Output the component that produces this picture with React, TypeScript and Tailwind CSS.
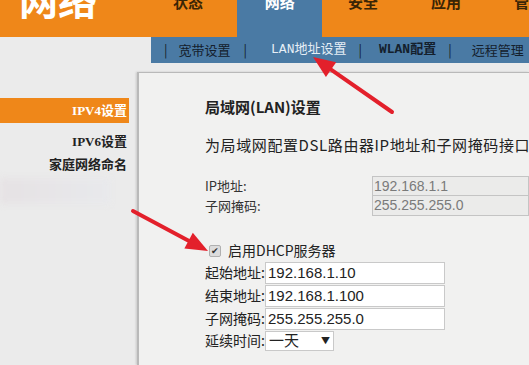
const cjk = { fontFamily: '"Noto Sans CJK SC", "Liberation Sans", sans-serif' };
const serif = { fontFamily: '"Liberation Serif", "Noto Sans CJK SC", serif' };

const Arrow = ({ x1, y1, x2, y2 }: { x1: number; y1: number; x2: number; y2: number }) => {
  const a = Math.atan2(y2 - y1, x2 - x1);
  const len = 22;
  const w = 9;
  const bx = x2 - len * Math.cos(a);
  const by = y2 - len * Math.sin(a);
  const px = -Math.sin(a) * w;
  const py = Math.cos(a) * w;
  return (
    <g>
      <line x1={x1} y1={y1} x2={bx} y2={by} stroke="#e3202b" strokeWidth="4" strokeLinecap="round" />
      <polygon points={`${x2},${y2} ${bx + px},${by + py} ${bx - px},${by - py}`} fill="#e3202b" />
    </g>
  );
};

const Field = ({ label, value }: { label: string; value: string }) => (
  <div className="flex items-center h-[23px]">
    <span className="w-[60px] text-[14px] text-[#222]">{label}</span>
    <div className="w-[180px] h-[22px] bg-white border border-[#c9c9c9] px-[2px] text-[15px] leading-[20px] text-[#222]" style={{ fontFamily: '"Liberation Sans", sans-serif' }}>
      {value}
    </div>
  </div>
);

export default function App() {
  return (
    <div className="relative w-[529px] h-[365px] overflow-hidden bg-[#ebebeb]" style={cjk}>
      {/* header */}
      <div className="h-[37px] bg-[#ef8719] flex items-start">
        <div className="ml-[19px] -mt-[21px] text-[39px] leading-none font-bold text-white w-[156px]">网络</div>
        <div className="-mt-[9px] text-[15px] font-bold text-[#3a2505] w-[65px]">状态</div>
        <div className="w-[86px] h-[37px] bg-[#4a7aa4] flex justify-center">
          <span className="-mt-[9px] text-[15px] font-bold text-white">网络</span>
        </div>
        <div className="ml-[26px] -mt-[9px] text-[15px] font-bold text-[#3a2505] w-[84px]">安全</div>
        <div className="-mt-[9px] text-[15px] font-bold text-[#3a2505] w-[84px]">应用</div>
        <div className="-mt-[9px] text-[15px] font-bold text-[#3a2505]">管</div>
      </div>
      <div className="ml-[151px] h-[26px] bg-[#4a7aa4] flex items-center text-[13px] text-[#14202c]">
        <span className="ml-[13px]">|</span>
        <span className="ml-[11px]">宽带设置</span>
        <span className="ml-[13px]">|</span>
        <span className="ml-[24px] text-[#e6eef6]" style={{ fontFamily: '"Liberation Mono", "Noto Sans CJK SC", monospace' }}>LAN地址设置</span>
        <span className="ml-[12px]">|</span>
        <span className="ml-[17px] font-bold" style={{ fontFamily: '"Liberation Mono", "Noto Sans CJK SC", monospace' }}>WLAN配置</span>
        <span className="ml-[12px]">|</span>
        <span className="ml-[20px]">远程管理</span>
      </div>

      <div className="flex h-[302px]">
        {/* sidebar */}
        <div className="w-[137px] shrink-0 pt-[35px] flex flex-col">
          <div className="w-[129px] h-[25px] bg-[#ef8719] text-white font-bold text-[13px] flex items-center justify-end pr-[2px]" style={serif}>
            IPV4设置
          </div>
          <div className="w-[129px] mt-[9px] text-right text-[13px] font-bold text-[#222] pr-[2px]" style={serif}>IPV6设置</div>
          <div className="w-[129px] mt-[3px] text-right text-[13px] font-bold text-[#222] pr-[2px]" style={serif}>家庭网络命名</div>
          <div className="mt-[4px] w-[110px] h-[26px] bg-gradient-to-r from-[#e6e2e4] to-[#e8e9ec] blur-[3px]" />
        </div>
        {/* content */}
        <div className="flex-1 min-w-0 overflow-hidden mt-[9px] bg-[#f1f1f0] border-l-2 border-t border-[#b9b9b9] shadow-[-1px_0_2px_rgba(0,0,0,0.15)] pl-[66px] pt-[23px]">
          <div className="text-[15px] font-bold text-[#222]">局域网(LAN)设置</div>
          <div className="mt-[15px] text-[15px] tracking-[0.6px] text-[#222] whitespace-nowrap">为局域网配置DSL路由器IP地址和子网掩码接口</div>
          <div className="mt-[20px] flex">
            <div className="w-[167px] shrink-0 text-[13px] text-[#333] leading-[20px]">
              <div>IP地址:</div>
              <div>子网掩码:</div>
            </div>
            <div className="flex-1 text-[14px] text-[#7a7a7a] leading-[19px]" style={{ fontFamily: '"Liberation Sans", sans-serif' }}>
              <div className="h-[20px] bg-[#ebebea] border border-[#c4c4c4] px-[1px]">192.168.1.1</div>
              <div className="h-[20px] bg-[#ebebea] border border-[#c4c4c4] border-t-0 px-[1px]">255.255.255.0</div>
            </div>
          </div>
          <div className="mt-[26px] flex items-center h-[17px]">
            <span className="ml-[4px] w-[12px] h-[12px] bg-[#dcdcdc] border border-[#b0b0b0] rounded-[2px] flex items-center justify-center text-[9px] leading-none text-[#333]">✔</span>
            <span className="ml-[7px] text-[14px] text-[#222]">启用DHCP服务器</span>
          </div>
          <div className="mt-[2px] flex flex-col">
            <Field label="起始地址:" value="192.168.1.10" />
            <Field label="结束地址:" value="192.168.1.100" />
            <Field label="子网掩码:" value="255.255.255.0" />
            <div className="flex items-center h-[21px]">
              <span className="w-[60px] text-[14px] text-[#222]">延续时间:</span>
              <div className="w-[69px] h-[20px] bg-white border border-[#c9c9c9] flex items-center px-[3px] text-[15px] text-[#222]">
                <span className="flex-1">一天</span>
                <span className="text-[9px]">▼</span>
              </div>
            </div>
          </div>
        </div>
      </div>

      <svg className="absolute inset-0 pointer-events-none" width="529" height="365">
        <Arrow x1={392} y1={112} x2={313} y2={57} />
        <Arrow x1={133} y1={211} x2={208} y2={251} />
      </svg>
    </div>
  );
}
